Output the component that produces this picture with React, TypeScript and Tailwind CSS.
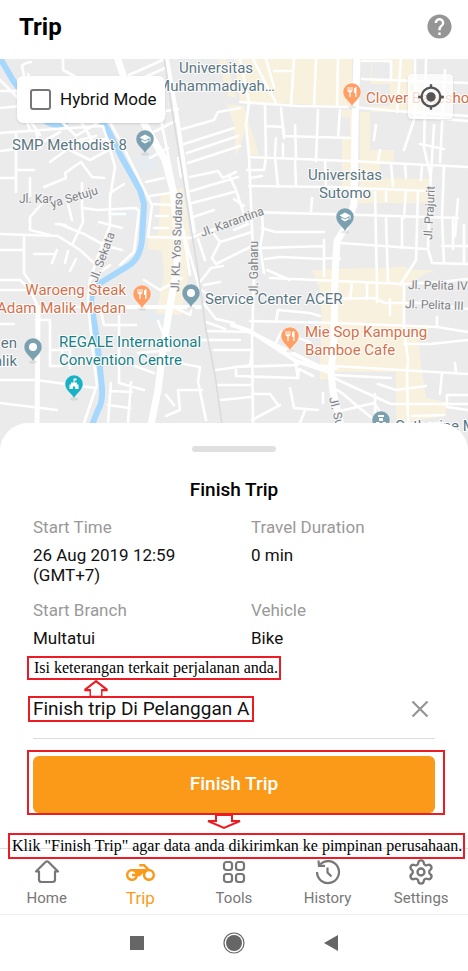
import { useState } from "react";
import type { ReactNode } from "react";
import { MdHelp, MdMyLocation, MdRestaurant, MdSchool } from "react-icons/md";
import { Settings } from "lucide-react";

const blocks = [
  "M234 59H352V106L240 102Z",
  "M362 62H371V112H411L413 59H362Z",
  "M398 83H420V112H396Z",
  "M218 59H226L236 98L228 96Z",
  "M227 104L244 106L259 155H248L246 128L236 157L234 125Z",
  "M342 110H352V190H342Z",
  "M360 112H370V150H394V161L380 162V178L430 179V203H356L352 190L360 186Z",
  "M161 194L183 188L190 240L188 276L181 315L156 314L164 275L162 251L148 249V236L158 234Z",
  "M312 270H412L434 270L406 284L404 325H428V334L418 336L420 358L426 398L446 402V416L396 423V372H334L331 378L320 380V366L322 321L320 289Z",
  "M325 269L390 268L402 266L414 270L400 280H312Z",
];

const roads = [
  "M0 80L18 98L30 130M0 91H18M0 108L20 106L40 135M24 76L22 66Q24 63 31 62M28 74L40 96M63 59V70L78 78M129 75L165 59M125 86L165 68M80 120L92 140M50 110L76 136L96 124",
  "M0 133L70 128L103 126L112 156L115 167L110 198V226L98 256L90 280M70 150L90 160L112 148M50 162L80 140L96 136M80 143L105 139M16 170V192M30 178V196M0 178H16V132M16 170H34",
  "M44 187L66 178L65 173L81 162L92 177L104 178M45 200L30 217V230L50 235M67 200L72 220M82 183V208L98 210L136 208L139 211L134 252L120 265M82 208L83 222L72 245M110 193L124 184M109 214H125M99 222L122 228M66 225L56 224M60 224L74 230L84 234L106 246L122 250",
  "M0 234L58 236L80 250L94 263M24 236V273L36 291M0 250H24M34 254H55M57 250L52 263M68 251L65 263M76 259L70 271",
  "M142 125L165 114M144 137L177 120M150 158L168 148M146 182L164 178M150 196L170 193M154 204L170 205M156 216L168 216M154 228H168M142 115L178 109",
  "M110 122L125 150L142 185L152 205L148 237L190 238L234 222M160 115L184 235L200 290",
  "M179 130L214 120L218 112L240 108M184 144L234 128M187 153L238 136M188 163L240 146M190 177L218 171L223 178L236 172M191 191L238 177M192 203L234 192M193 217L214 210M178 158L181 177M229 175L236 190L247 224",
  "M198 239L205 260M214 234L220 242L212 258L216 264L252 246M220 242L252 232M234 199L244 206M234 230L248 224M200 282L211 268L223 266M201 290L212 297L252 301M204 304L216 319L234 323M208 331L250 332M214 350L250 350M216 370L252 365M217 385H252M221 400L251 397",
  "M0 290H37M0 280H20L30 290L38 307M38 307H156M0 324H14M0 380H36L95 388M0 403L57 410M36 320H50V366H62V350M52 350H70V368M100 307L104 325H136M119 316V383L144 390M111 383L108 423M110 391L132 392M108 405L130 408M131 382L128 423M158 321L170 350L138 353M135 366L154 373M163 360L200 367L198 382L206 420M178 390H202M178 390L180 410L166 416M166 395L174 405M172 306L190 315L193 302",
  "M240 59L249 102L246 125L249 156L254 276L252 340L253 423M253 59L276 103M266 59L274 87M274 71H292M294 59L291 106M316 59L314 107M338 59L337 107M240 102L298 106L352 107L396 111L468 116",
  "M362 61H391V80M362 79L468 83M401 59L397 112M415 59V117L404 150M426 60L424 148L431 178M445 70L440 162M436 94L468 100M416 117L468 121M265 106L266 157M281 108L284 138M265 126L283 127L284 132M295 125L296 157M318 110L316 161M340 110L338 137M284 136L350 138",
  "M249 157L300 159L350 161L468 167M249 186L330 187L430 191M250 212L362 215L458 218M266 157L264 170H247M275 157L278 187M295 160L296 186M325 160L326 187M276 138L275 155M283 144V156M312 198L311 211M262 176L250 178M376 125L374 140M380 150L378 162M391 164L393 186M405 164L406 178M422 165L421 180M386 192V201M375 192L376 240L377 280M386 218L388 282M406 190L404 218",
  "M434 125L430 190L428 249L432 263L468 264M444 166L442 217L444 264M458 199L455 236M464 225V264M442 246H468M453 217V249M420 144L444 149M418 192L416 260L400 285M402 218V248M340 243L426 249M324 240V276M325 258L340 259M262 228L275 232H324M262 248L324 246M265 259L280 257L324 259M262 214L263 230L260 248L264 273",
  "M270 278L405 284L440 282L468 279M267 270L290 280M320 299L374 298L385 303H424L468 309M390 299V315M352 283L350 299M367 284V299M377 280V302M250 321L336 323L437 327V317M437 327L468 332M276 322L278 310L310 313L320 316M275 345L281 332L310 342M404 285V330L408 360L407 375L408 423M404 344L430 344L468 340M407 336L425 334",
  "M234 367L298 365M236 370V376L298 378L295 360M250 365L252 350M298 378L299 369L313 376M252 394H270L278 405M252 420L280 405M334 366L468 374M334 375L391 378M334 378L362 391L391 404H468M330 386L342 393L356 405L378 423M442 373L440 394M455 363L456 372M378 384L396 390L426 386M447 395H468M447 395V407L468 410M412 416L444 415M375 394V423M305 410L300 423M290 388L294 408L318 410M323 393V403M340 411L374 403L388 423",
  "M0 151L34 147L60 132M36 132L40 148M183 230L190 275M200 340H240M144 280L160 290L182 278M204 285L220 282M206 322L225 329M110 265L90 280L88 300L92 345L97 385L84 423",
];

const river =
  "M0 58L14 82L34 108Q46 128 62 124Q80 112 98 116L108 130L122 158L140 190L144 204L142 240Q140 259 128 266L105 280Q91 288 91 302L97 340L102 388Q103 402 98 410L92 425";

type PinProps = { x: number; y: number; fill: string; children?: ReactNode };

const Pin = ({ x, y, fill, children }: PinProps) => (
  <g transform={`translate(${x} ${y})`}>
    <ellipse cx="0" cy="14" rx="4" ry="1.5" fill="#000" opacity=".08" />
    <path
      d="M0 14C-1 9 -9 6 -9 -1A9 9 0 0 1 9 -1C9 6 1 9 0 14Z"
      fill={fill}
      stroke="#fff"
      strokeWidth=".4"
    />
    {children ?? <circle cy="-1" r="4" fill="#fff" />}
  </g>
);

type LabelProps = {
  x: number;
  y: number;
  fill: string;
  lines: string[];
  anchor?: "start" | "middle" | "end";
};

const Label = ({ x, y, fill, lines, anchor = "start" }: LabelProps) => (
  <text
    fill={fill}
    textAnchor={anchor}
    className="text-[15px]"
    stroke="#fff"
    strokeWidth="2"
    strokeLinejoin="round"
    paintOrder="stroke"
  >
    {lines.map((line, i) => (
      <tspan key={line} x={x} y={y + i * 18}>
        {line}
      </tspan>
    ))}
  </text>
);

type StreetProps = { x: number; y: number; angle: number; name: string };

const Street = ({ x, y, angle, name }: StreetProps) => (
  <text
    transform={`translate(${x} ${y}) rotate(${angle})`}
    fill="#7d8185"
    className="text-[12px]"
    stroke="#f5f5f5"
    strokeWidth="2"
    paintOrder="stroke"
  >
    {name}
  </text>
);

const slate = "#5a7683";
const teal = "#168087";
const rust = "#d2714a";

const TripMap = () => (
  <svg
    viewBox="0 59 468 392"
    preserveAspectRatio="xMidYMin slice"
    className="block h-[392px] w-full bg-[#ebebeb]"
    role="img"
    aria-label="Map"
  >
    <g fill="#f8f1de">
      {blocks.map((d) => (
        <path key={d} d={d} />
      ))}
    </g>
    <path d="M278 115L350 118V136H284ZM372 62H391V80H372ZM371 84H390V106H371Z" fill="#ebebeb" />
    <path d="M134 160L152 150L158 170L140 174ZM112 210L136 209L134 217H114ZM148 312L166 314L164 324L150 322Z" fill="#e6ecef" />
    <path d="M410 85H416V91H411Z" fill="#c9ecc2" />
    <path d={river} fill="none" stroke="#a5d8fc" strokeWidth="6" strokeLinejoin="round" />
    <g fill="none" stroke="#fff" strokeWidth="2.6" strokeLinecap="round" strokeLinejoin="round">
      {roads.map((d) => (
        <path key={d} d={d} />
      ))}
      <path
        d="M167 59L178 123L188 195L194 232M232 325L250 331L296 361L330 372M250 332L318 366L336 368M120 307H200M38 307V330"
        strokeWidth="4"
      />
      <path d="M117 57L130 95L145 125L165 160L173 190L177 230L177 270L170 305L163 350L158 390L151 425" strokeWidth="7" />
      <path d="M38 310L37 430" strokeWidth="5" />
      <path d="M357 57L355 125L354 205L345 228L337 241L335 275L334 340L331 372L333 392L341 426" strokeWidth="7" />
    </g>
    <path d="M164 57L172 110L185 190L198 272L206 330L215 375L222 425" fill="none" stroke="#d9dbdd" strokeWidth="1.6" />

    <Street x={19} y={203} angle={0} name="Jl. Kar" />
    <Street x={52} y={208} angle={-17} name="ya Setuju" />
    <Street x={97} y={283} angle={-70} name="Jl. Sekata" />
    <Street x={179} y={292} angle={-88} name="Jl. KL Yos Sudarso" />
    <Street x={202} y={237} angle={-20} name="Jl. Karantina" />
    <Street x={258} y={295} angle={-90} name="Jl. Gaharu" />
    <Street x={432} y={240} angle={-87} name="Jl. Prajurit" />
    <Street x={408} y={289} angle={1} name="Jl. Pelita IV" />
    <Street x={405} y={308} angle={2} name="Jl. Pelita III" />
    <Street x={329} y={398} angle={76} name="Jl. Su" />

    <Label x={216} y={73} fill={slate} anchor="middle" lines={["Universitas", "Muhammadiyah…"]} />
    <Label x={12} y={150} fill={slate} lines={["SMP Methodist 8"]} />
    <Label x={345} y={180} fill={slate} anchor="middle" lines={["Universitas", "Sutomo"]} />
    <Label x={366} y={103} fill={rust} lines={["Clover Bakeshop"]} />
    <Label x={126} y={295} fill={rust} anchor="end" lines={["Waroeng Steak", "Adam Malik Medan"]} />
    <Label x={205} y={304} fill={slate} lines={["Service Center ACER"]} />
    <Label x={17} y={348} fill={slate} anchor="end" lines={["en", "alik"]} />
    <Label x={59} y={347} fill={teal} lines={["REGALE International", "Convention Centre"]} />
    <Label x={305} y={337} fill={rust} lines={["Mie Sop Kampung", "Bamboe Cafe"]} />
    <Label x={395} y={431} fill={slate} lines={["Catherine M"]} />

    <Pin x={145} y={140} fill="#7ba0b0">
      <MdSchool x={-6} y={-7} size={12} color="#fff" />
    </Pin>
    <Pin x={345} y={218} fill="#7ba0b0">
      <MdSchool x={-6} y={-7} size={12} color="#fff" />
    </Pin>
    <Pin x={352} y={93} fill="#ff9f66">
      <MdRestaurant x={-6} y={-7} size={12} color="#fff" />
    </Pin>
    <Pin x={142} y={295} fill="#ff9f66">
      <MdRestaurant x={-6} y={-7} size={12} color="#fff" />
    </Pin>
    <Pin x={290} y={337} fill="#ff9f66">
      <MdRestaurant x={-6} y={-7} size={12} color="#fff" />
    </Pin>
    <Pin x={191} y={294} fill="#7ba0b0" />
    <Pin x={33} y={348} fill="#7ba0b0" />
    <Pin x={74} y={385} fill="#18b1c5">
      <path d="M-.5 -6.500H2.500V-4.500H.5V-2.500H3V-.5H4.500V4H1.200V1.500H-1.200V4H-4.500V-.5H-3V-2.500H-.5Z" fill="#fff" />
    </Pin>
    <Pin x={381} y={421} fill="#7ba0b0">
      <path d="M-3 -6H3V-4H-3ZM-2 -3H2V0H-2ZM-5 1L-2 1L0 4L2 1L5 1V5H-5Z" fill="#fff" />
    </Pin>
  </svg>
);

const BikeIcon = () => (
  <svg viewBox="0 0 24 24" className="size-[29px]" fill="currentColor">
    <path d="M19.440 9.030L15.410 5H11v2h3.590l2 2H5c-2.800 0-5 2.200-5 5s2.200 5 5 5c2.460 0 4.450-1.690 4.900-4h1.650l2.770-2.770c-.21.540-.32 1.140-.32 1.770 0 2.800 2.200 5 5 5s5-2.200 5-5c0-2.650-1.970-4.770-4.560-4.970zM7.820 15C7.400 16.150 6.280 17 5 17c-1.630 0-3-1.370-3-3s1.370-3 3-3c1.280 0 2.400.85 2.820 2H5v2h2.820zM19 17c-1.660 0-3-1.340-3-3s1.340-3 3-3 3 1.340 3 3-1.340 3-3 3z" />
  </svg>
);

const HomeIcon = () => (
  <svg viewBox="0 0 26 26" className="size-[26px]" fill="none" stroke="currentColor" strokeWidth="2.200" strokeLinejoin="round">
    <path d="M11.500 3Q13 1.800 14.500 3L24 12.500H21V20.500Q21 23 18.500 23H7.500Q5 23 5 20.500V12.500H2Z" />
  </svg>
);

const ToolsIcon = () => (
  <svg viewBox="0 0 26 26" className="size-[26px]" fill="none" stroke="currentColor" strokeWidth="2.200">
    <rect x="3" y="3" width="8" height="8" rx="2.500" />
    <rect x="15" y="3" width="8" height="8" rx="2.500" />
    <rect x="3" y="15" width="8" height="8" rx="2.500" />
    <rect x="15" y="15" width="8" height="8" rx="2.500" />
  </svg>
);

const HistoryIcon = () => (
  <svg viewBox="0 0 26 26" className="size-[26px]" fill="none" stroke="currentColor" strokeWidth="2.200">
    <path d="M2 13A11 11 0 1 0 5 5.500" />
    <path d="M3.500 1.500L4 6.800L10 6.800" />
    <path d="M12.500 8.500V13.500L16.500 17.500" />
  </svg>
);

const tabs = [
  { name: "Home", icon: <HomeIcon /> },
  { name: "Trip", icon: <BikeIcon />, active: true },
  { name: "Tools", icon: <ToolsIcon /> },
  { name: "History", icon: <HistoryIcon /> },
  { name: "Settings", icon: <Settings size={28} strokeWidth={2} /> },
];

const details = [
  { label: "Start Time", value: "26 Aug 2019 12:59 (GMT+7)" },
  { label: "Travel Duration", value: "0 min" },
  { label: "Start Branch", value: "Multatui" },
  { label: "Vehicle", value: "Bike" },
];

const Arrow = ({ className, d }: { className: string; d: string }) => (
  <svg viewBox="0 0 36 16" className={className} fill="#fff" stroke="#ed1c24" strokeWidth="2" preserveAspectRatio="none">
    <path d={d} />
  </svg>
);

const App = () => {
  const [note, setNote] = useState("Finish trip Di Pelanggan A");

  return (
    <div className="min-h-screen bg-white font-['Roboto',sans-serif] text-[#111]">
      <header className="flex h-[59px] items-center justify-between pr-[14px] pb-[6px] pl-[19px]">
        <h1 className="text-2xl font-bold text-black">Trip</h1>
        <button aria-label="Help" className="text-[#959595]">
          <MdHelp size={29} />
        </button>
      </header>

      <section className="relative">
        <TripMap />
        <label className="absolute top-[17px] left-[17px] flex h-[47px] items-center gap-[9px] rounded-md bg-white pr-2 pl-[13px] text-[17px] shadow">
          <input type="checkbox" className="size-[21px] appearance-none rounded-[3px] border-2 border-[#777] bg-white" />
          Hybrid Mode
        </label>
        <button
          aria-label="My location"
          className="absolute top-[15px] right-[15px] flex size-[45px] items-center justify-center rounded-sm bg-white/75 text-[#555] shadow"
        >
          <MdMyLocation size={28} />
        </button>
      </section>

      <main className="relative -mt-7 rounded-t-[28px] bg-white px-[33px] pt-[23px] pb-[33px]">
        <div className="mx-auto h-[6px] w-[84px] rounded-full bg-[#e0e0e0]" />
        <h2 className="mt-[26px] text-center text-[19px] leading-6 font-medium text-black">Finish Trip</h2>

        <dl className="mt-[15px] grid grid-cols-2 gap-x-[34px] gap-y-[15px] text-[17px] leading-5">
          {details.map(({ label, value }) => (
            <div key={label}>
              <dt className="text-[#999]">{label}</dt>
              <dd className="mt-2 max-w-[160px]">{value}</dd>
            </div>
          ))}
        </dl>

        <div className="relative mt-2 -ml-[6px] w-fit border-2 border-[#ed1c24] pr-px pl-[5px] font-['Liberation_Serif',serif] text-base leading-5 text-black">
          Isi keterangan terkait perjalanan anda.
          <Arrow className="absolute top-[22px] left-[54px] h-[18px] w-[26px]" d="M18 1L34 9H26V15H10V9H2Z" />
        </div>

        <div className="mt-4 flex items-center justify-between border-b border-[#ddd] pb-4">
          <input
            aria-label="Trip note"
            value={note}
            onChange={(e) => setNote(e.target.value)}
            className="-ml-[5px] h-[26px] w-[226px] border-2 border-[#ed1c24] bg-white pl-[3px] text-[19px] outline-none"
          />
          <button aria-label="Clear" onClick={() => setNote("")} className="pr-[6px] text-[#959595]">
            <svg viewBox="0 0 18 18" className="size-[18px]" stroke="currentColor" strokeWidth="2.200">
              <path d="M1.500 1.500L16.500 16.500M16.500 1.500L1.500 16.500" />
            </svg>
          </button>
        </div>

        <div className="-mr-[10px] -ml-[6px] mt-[11px] border-2 border-[#ed1c24] pt-1 pr-2 pl-1">
          <button className="h-[57px] w-full rounded-md bg-[#fb9a19] text-[19px] font-medium text-white">Finish Trip</button>
        </div>

        <div className="absolute bottom-[-11px] left-2 border-2 border-[#ed1c24] pr-px pl-[2px] font-['Liberation_Serif',serif] text-base leading-[22px] whitespace-nowrap text-black">
          Klik "Finish Trip" agar data anda dikirimkan ke pimpinan perusahaan.
          <Arrow className="absolute top-[-21px] left-[196px] h-4 w-9" d="M10 1V7H2L18 14L34 7H26V1Z" />
        </div>
      </main>

      <nav className="flex h-[67px] justify-around border-y border-t-[#ddd] border-b-[#f0f0f0] text-[#777]">
        {tabs.map(({ name, icon, active }) => (
          <a
            key={name}
            href={`#${name.toLowerCase()}`}
            className={`flex flex-1 flex-col items-center pt-[9px] ${active ? "text-[17px] text-[#fb9a19]" : "text-[15px]"}`}
          >
            <span className="flex h-7 items-center">{icon}</span>
            <span className="leading-6">{name}</span>
          </a>
        ))}
      </nav>

      <footer className="flex h-14 items-center justify-center gap-[79px] text-[#666]">
        <button aria-label="Recent apps">
          <svg viewBox="0 0 14 14" className="size-[14px]" fill="currentColor">
            <rect width="14" height="14" />
          </svg>
        </button>
        <button aria-label="Home screen">
          <svg viewBox="0 0 22 22" className="size-[22px]" fill="currentColor">
            <circle cx="11" cy="11" r="8" />
            <circle cx="11" cy="11" r="10" fill="none" stroke="currentColor" strokeWidth="1.200" />
          </svg>
        </button>
        <button aria-label="Back">
          <svg viewBox="0 0 14 16" className="h-4 w-[14px]" fill="currentColor">
            <path d="M14 0V16L0 8Z" />
          </svg>
        </button>
      </footer>
    </div>
  );
};

export default App;
